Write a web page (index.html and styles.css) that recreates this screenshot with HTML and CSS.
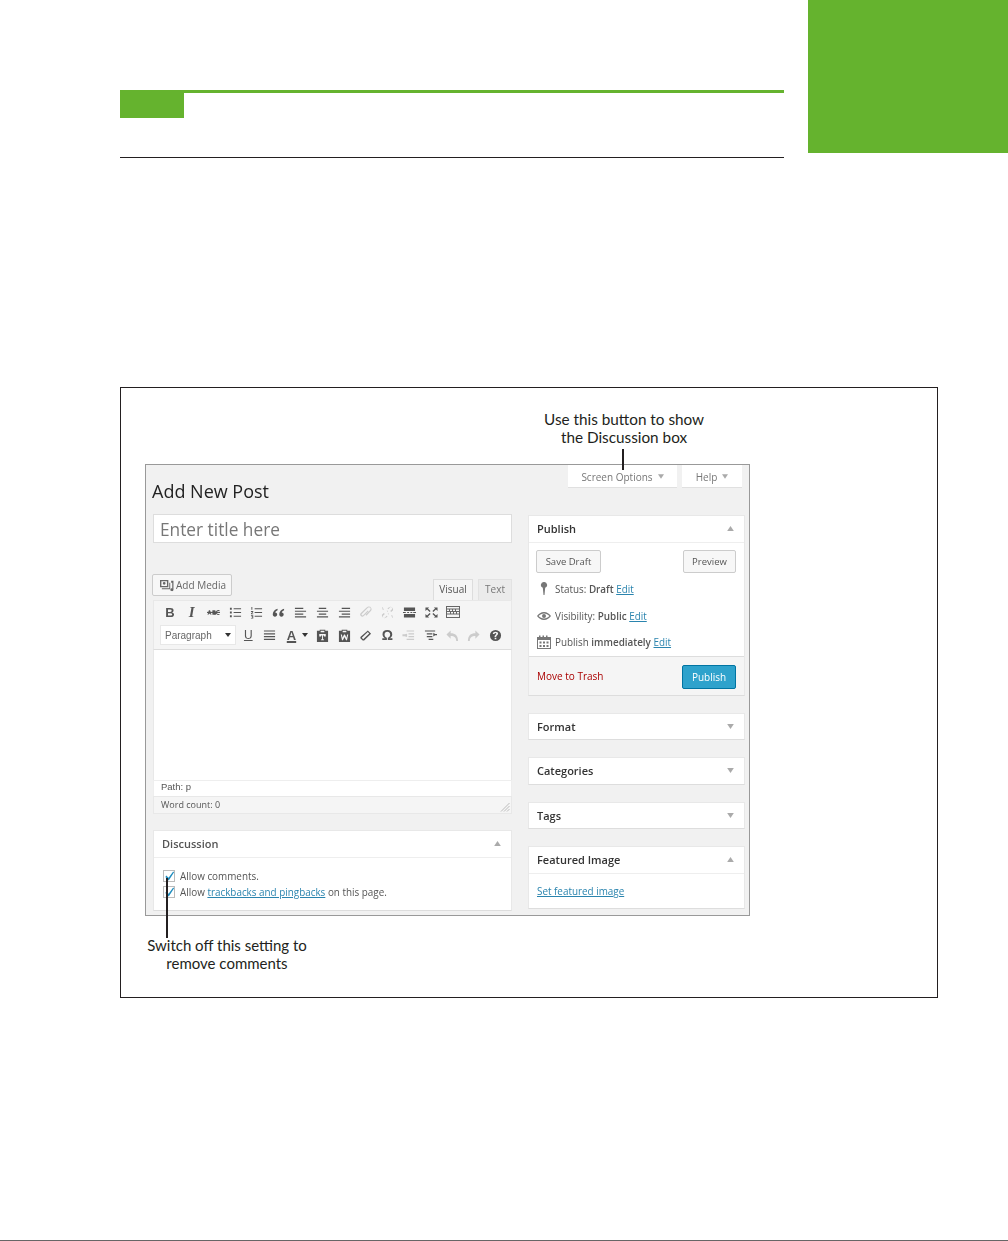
FILE: index.html
```html
<!DOCTYPE html>
<html lang="en">
<head>
<meta charset="utf-8">
<title>Add New Post</title>
<link rel="stylesheet" href="styles.css">
</head>
<body>
<div class="page">
  <header class="head">
    <div class="note">
      <div class="note-bar"><div class="note-tag"></div></div>
    </div>
    <div class="corner"></div>
  </header>

  <figure class="figure">
    <div class="callout callout-top">Use this button to show<br>the Discussion box</div>
    <div class="leader leader-top"></div>
    <div class="callout callout-bottom">Switch off this setting to<br>remove comments</div>
    <div class="leader leader-bottom"></div>

    <div class="screen">
      <div class="topbar">
        <h1 class="title">Add New Post</h1>
        <div class="tabs">
          <div class="tab tab-screen">Screen Options <svg class="tri" viewBox="0 0 8 6"><path d="M0 0h8L4 6z"/></svg></div>
          <div class="tab tab-help">Help <svg class="tri" viewBox="0 0 8 6"><path d="M0 0h8L4 6z"/></svg></div>
        </div>
      </div>

      <div class="columns">
        <div class="col-main">
          <div class="title-input">Enter title here</div>
          <div class="media-row">
            <div class="add-media">
              <svg class="media-ic" viewBox="0 0 16 14"><path fill-rule="evenodd" d="M1 1h9v8H1zM2.500 2.500v5h6v-5zM5.500 3.200a1.500 1.500 0 1 1 0 3 1.500 1.500 0 0 1 0-3z"/><path d="M3 10h8V4h1v7H3z"/><path d="M13 2h2.500v9.500a1.700 1.500 0 1 1-1.300-1.400V4H13z"/></svg>
              Add Media
            </div>
            <div class="modes">
              <div class="mode mode-on">Visual</div>
              <div class="mode">Text</div>
            </div>
          </div>

          <div class="toolbar">
            <div class="tool-row tool-row-1">
              <span class="tb tb-b">B</span>
              <span class="tb tb-i">I</span>
              <span class="tb"><svg class="ic" viewBox="0 0 14 14"><path d="M0 6.300h14v1.200H0z"/><path d="M2 4.500h1.300L4.800 9.500H3.800l-.3-1.100H1.900l-.3 1.100H.6zM5.800 4.500h2.300a1.300 1.300 0 0 1 .7 2.400 1.300 1.300 0 0 1-.7 2.600H5.800zM13.500 5.500c-1.800-.6-2.700.2-2.700 1.500s.9 2.100 2.700 1.500v1c-2.500.6-3.900-.6-3.900-2.500s1.400-3.100 3.900-2.500z"/></svg></span>
              <span class="tb"><svg class="ic" viewBox="0 0 14 14"><path d="M1 2h2v2H1zM1 6h2v2H1zM1 10h2v2H1zM5 2.500h8v1H5zM5 6.500h8v1H5zM5 10.500h8v1H5z"/></svg></span>
              <span class="tb"><svg class="ic" viewBox="0 0 14 14"><path d="M1.500 1h1v3h-1zM1 5.500h2.500v1L2 8h1.500v1H1V8l1.500-1.500H1zM1 10h2.500v3.500H1v-.7h1.500v-.7H1.500v-.7h1v-.7H1zM5 2.500h8v1H5zM5 6.500h8v1H5zM5 10.500h8v1H5z"/></svg></span>
              <span class="tb"><svg class="ic" viewBox="0 0 14 14"><path d="M6 3C3 4 .8 6 .8 9c0 1.500 1 2.500 2.400 2.500S5.600 10.500 5.600 9.200 4.600 7 3.500 7c.3-1.200 1.200-2 2.500-2.500zM13 3c-3 1-5.200 3-5.200 6 0 1.500 1 2.500 2.400 2.500s2.400-1 2.400-2.300S11.600 7 10.500 7c.3-1.200 1.200-2 2.500-2.500z"/></svg></span>
              <span class="tb"><svg class="ic" viewBox="0 0 14 14"><path d="M1 2h9v1.300H1zM1 5h12v1.300H1zM1 8h9v1.300H1zM1 11h12v1.300H1z"/></svg></span>
              <span class="tb"><svg class="ic" viewBox="0 0 14 14"><path d="M3 2h8v1.300H3zM1 5h12v1.300H1zM3 8h8v1.300H3zM1 11h12v1.300H1z"/></svg></span>
              <span class="tb"><svg class="ic" viewBox="0 0 14 14"><path d="M4 2h9v1.300H4zM1 5h12v1.300H1zM4 8h9v1.300H4zM1 11h12v1.300H1z"/></svg></span>
              <span class="tb"><svg class="ic ic-off" viewBox="0 0 14 14"><path d="M10.500.5a3 3 0 0 1 2.500 4.700L8 10.500l-1-1 5-5.300a1.600 1.600 0 0 0-2.400-2.200L3 8.500a1 1 0 0 0 1.400 1.400l5-5 .8.8-5 5.100a2.200 2.200 0 0 1-3.200-3.200L8.500 1.300A3 3 0 0 1 10.500.5z"/></svg></span>
              <span class="tb"><svg class="ic ic-off" viewBox="0 0 14 14"><path d="M9.500 1a3 3 0 0 1 3.500 3.500L11 6.500 9.900 5.400l1.700-1.700a1.400 1.400 0 0 0-2-2L8 3.400 6.900 2.300zM4.500 13A3 3 0 0 1 1 9.500L3 7.500l1.100 1.100-1.700 1.700a1.400 1.400 0 0 0 2 2L6 10.600l1.100 1.100zM1 1l1 .5L3 4l-1 .3zM13 13l-1-.5L11 10l1-.3zM6 5h1.500v1.500zM7 8h1.500v1.500z"/></svg></span>
              <span class="tb"><svg class="ic" viewBox="0 0 14 14"><path d="M1 1.500h12v4H1zM1 8.500h12v4H1zM0 6.500h3v1H0zM4.500 6.500h2v1h-2zM8 6.500h2v1H8zM11 6.500h3v1h-3z"/></svg></span>
              <span class="tb"><svg class="ic" viewBox="0 0 14 14"><path d="M.5 1.500h4L3.200 2.800 6 5.500 5 6.500 2.200 3.800.5 5.500zM13.500 1.500v4l-1.700-1.700L9 6.500 8 5.500l2.800-2.700-1.300-1.300zM.5 12.500v-4l1.700 1.700L5 7.500l1 1-2.800 2.700 1.300 1.300zM13.500 12.500h-4l1.300-1.300L8 8.500l1-1 2.800 2.700 1.700-1.700z"/></svg></span>
              <span class="tb"><svg class="ic ic-kbd" viewBox="0 0 14 14"><path fill-rule="evenodd" d="M0 1h14v12H0zM1 2v1.500h12V2zM1 4.500V6h2V4.500zM4 4.500V6h2V4.500zM7 4.500V6h2V4.500zM10 4.500V6h3V4.500zM1 7V8.500h3V7zM5 7V8.500h2V7zM8 7V8.500h2V7zM11 7V8.500h2V7zM1 9.500V12h12V9.500z"/></svg></span>
            </div>
            <div class="tool-row tool-row-2">
              <div class="format-select">Paragraph <svg class="caret" viewBox="0 0 6 4"><path d="M0 0h6L3 4z"/></svg></div>
              <span class="tb tb-u">U</span>
              <span class="tb"><svg class="ic" viewBox="0 0 14 14"><path d="M1 1.500h12v1.300H1zM1 4.500h12v1.300H1zM1 7.500h12v1.300H1zM1 10.500h12v1.300H1z"/></svg></span>
              <span class="tb tb-color">A</span>
              <span class="tb-caret"><svg class="caret" viewBox="0 0 6 4"><path d="M0 0h6L3 4z"/></svg></span>
              <span class="tb"><svg class="ic" viewBox="0 0 14 14"><path fill-rule="evenodd" d="M1 2h3V.8h6V2h3v12H1zM5 2v1.500h4V2zM3.500 5.500V8h2V7h1v4H5.500v1h3v-1H7.500V7h1v1h2V5.500z"/></svg></span>
              <span class="tb"><svg class="ic" viewBox="0 0 14 14"><path fill-rule="evenodd" d="M1 2h3V.8h6V2h3v12H1zM5 2v1.500h4V2zM3 6l1.300 6h1L7 8.500 8.700 12h1L11 6H9.800l-.7 3.500L7.500 6h-1L4.900 9.500 4.200 6z"/></svg></span>
              <span class="tb"><svg class="ic" viewBox="0 0 14 14"><path fill-rule="evenodd" d="M9.500 1.500 13 5 5.500 12.500H4L1.500 10V8.500zM9.500 3.300 3 9.500 4.500 11 11 4.800z"/></svg></span>
              <span class="tb tb-omega">Ω</span>
              <span class="tb"><svg class="ic ic-off" viewBox="0 0 14 14"><path d="M5 1.500h8v1.300H5zM7 4.500h6v1.300H7zM7 7.500h6v1.300H7zM5 10.500h8v1.300H5zM5.500 5v3.500L2.800 7.800H.5V5.700h2.300z"/></svg></span>
              <span class="tb"><svg class="ic" viewBox="0 0 14 14"><path d="M1 1.500h11v1.300H1zM3 4.500h6v1.300H3zM3 7.500h6v1.300H3zM5 10.500h5v1.300H5zM10 4v4l2-1.300h2V5.300h-2z"/></svg></span>
              <span class="tb"><svg class="ic ic-off" viewBox="0 0 14 14"><path d="M5 1.500v3c5 0 8 2.500 8 8.500h-2c0-3.800-2-5.500-6-5.500v3L.5 6z"/></svg></span>
              <span class="tb"><svg class="ic ic-off" viewBox="0 0 14 14"><path d="M9 1.500v3c-5 0-8 2.500-8 8.500h2c0-3.800 2-5.500 6-5.500v3L13.500 6z"/></svg></span>
              <span class="tb"><svg class="ic" viewBox="0 0 14 14"><path fill-rule="evenodd" d="M7 1a6 6 0 1 1 0 12A6 6 0 0 1 7 1zM7 3c-1.700 0-2.800.9-2.900 2.400h1.800c0-.6.400-1 1-1s1 .3 1 .8c0 1-2 1.300-2 3.300h1.800c0-1.500 2.100-1.600 2.100-3.600C9.800 3.900 8.700 3 7 3zM6.100 9.400v1.700h1.800V9.400z"/></svg></span>
            </div>
          </div>
          <div class="editor"></div>
          <div class="path-row">Path: p</div>
          <div class="word-row">Word count: 0
            <svg class="grip" viewBox="0 0 10 10"><path d="M9.500 1 1 9.500M9.500 4 4 9.500M9.500 7 7 9.500" fill="none" stroke="#bbb" stroke-width="1"/></svg>
          </div>

          <section class="box box-discussion">
            <div class="box-head box-head-rule"><span>Discussion</span><svg class="arrow" viewBox="0 0 8 6"><path d="M0 6h8L4 0z"/></svg></div>
            <div class="discussion-body">
              <div class="check-row">
                <span class="checkbox"><svg viewBox="0 0 12 12"><path d="M2.500 5.500 5 8l5-7 1 1-5.800 8.800L1.500 7z"/></svg></span>
                Allow comments.
              </div>
              <div class="check-row">
                <span class="checkbox"><svg viewBox="0 0 12 12"><path d="M2.500 5.500 5 8l5-7 1 1-5.800 8.800L1.500 7z"/></svg></span>
                <span>Allow <a class="link" href="#">trackbacks and pingbacks</a> on this page.</span>
              </div>
            </div>
          </section>
        </div>

        <aside class="col-side">
          <section class="box box-publish">
            <div class="box-head box-head-rule"><span>Publish</span><svg class="arrow" viewBox="0 0 8 6"><path d="M0 6h8L4 0z"/></svg></div>
            <div class="publish-actions">
              <div class="btn btn-draft">Save Draft</div>
              <div class="btn btn-preview">Preview</div>
            </div>
            <div class="meta">
              <svg class="meta-ic" viewBox="0 0 14 14"><path d="M7 0a3 3 0 0 1 1.200 5.800L7.500 13h-1l-.7-7.200A3 3 0 0 1 7 0z"/></svg>
              <span>Status: <b>Draft</b> <a class="link" href="#">Edit</a></span>
            </div>
            <div class="meta">
              <svg class="meta-ic" viewBox="0 0 14 14"><path fill-rule="evenodd" d="M7 3c3 0 5.500 2 7 4-1.500 2-4 4-7 4S1.500 9 0 7c1.500-2 4-4 7-4zM7 4.500C5 4.500 3 5.500 1.600 7 3 8.500 5 9.500 7 9.500s4-1 5.400-2.500C11 5.500 9 4.500 7 4.500zM7 5a2 2 0 1 1 0 4 2 2 0 0 1 0-4z"/></svg>
              <span>Visibility: <b>Public</b> <a class="link" href="#">Edit</a></span>
            </div>
            <div class="meta">
              <svg class="meta-ic" viewBox="0 0 14 14"><path fill-rule="evenodd" d="M0 2h2V.5h1.500V2h2V.5H7V2h2V.5h1.500V2H14v12H0zM1 5v8h12V5zM2.500 6.500h2v2h-2zM6 6.500h2v2H6zM9.500 6.500h2v2h-2zM2.500 10h2v2h-2zM6 10h2v2H6zM9.500 10h2v2h-2z"/></svg>
              <span>Publish <b>immediately</b> <a class="link" href="#">Edit</a></span>
            </div>
            <div class="publish-foot">
              <a class="trash" href="#">Move to Trash</a>
              <div class="btn-primary">Publish</div>
            </div>
          </section>

          <section class="box box-closed box-format">
            <div class="box-head"><span>Format</span><svg class="arrow" viewBox="0 0 8 6"><path d="M0 0h8L4 6z"/></svg></div>
          </section>
          <section class="box box-closed box-categories">
            <div class="box-head"><span>Categories</span><svg class="arrow" viewBox="0 0 8 6"><path d="M0 0h8L4 6z"/></svg></div>
          </section>
          <section class="box box-closed">
            <div class="box-head"><span>Tags</span><svg class="arrow" viewBox="0 0 8 6"><path d="M0 0h8L4 6z"/></svg></div>
          </section>
          <section class="box box-featured">
            <div class="box-head box-head-rule"><span>Featured Image</span><svg class="arrow" viewBox="0 0 8 6"><path d="M0 6h8L4 0z"/></svg></div>
            <div class="featured-body"><a class="link" href="#">Set featured image</a></div>
          </section>
        </aside>
      </div>
    </div>
  </figure>

  <footer class="foot"></footer>
</div>
</body>
</html>
```
FILE: styles.css
```css
* { box-sizing: border-box; }
html, body { margin: 0; padding: 0; background: #fff; }
body { font-family: "Open Sans", "Liberation Sans", sans-serif; color: #444; }

.page { width: 1008px; height: 1241px; display: flex; flex-direction: column; overflow: hidden; }

.head { display: flex; height: 153px; padding-left: 120px; }
.note { width: 664px; padding-top: 90px; }
.note-bar { height: 68px; border-top: 3px solid #65b32e; border-bottom: 1px solid #231f20; }
.note-tag { width: 64px; height: 25px; background: #65b32e; }
.corner { width: 200px; margin-left: 24px; background: #65b32e; }

.figure { position: relative; width: 818px; height: 611px; margin: 234px 0 0 120px; padding: 76px 0 0 24px; border: 1px solid #231f20; }
.callout { position: absolute; font-family: Lato, "Open Sans", sans-serif; font-size: 15.300px; line-height: 18px; color: #231f20; text-align: center; white-space: nowrap; }
.callout-top { left: 423px; top: 22px; width: 160px; }
.callout-bottom { left: 25px; top: 548px; width: 162px; font-size: 15px; }
.leader { position: absolute; width: 2px; background: #231f20; z-index: 2; }
.leader-top { left: 501px; top: 61px; height: 21px; }
.leader-bottom { left: 45px; top: 490px; height: 60px; }

.screen { width: 605px; height: 452px; background: #f1f1f1; border: 1px solid #999; filter: blur(0.45px); }

.topbar { display: flex; justify-content: space-between; align-items: flex-start; height: 49px; padding: 0 7px 0 6px; }
.title { margin: 14px 0 0; font-size: 18px; font-weight: 400; line-height: 25px; color: #222; }
.tabs { display: flex; gap: 5px; }
.tab { height: 23px; padding-top: 1px; background: #fff; border-bottom: 1px solid #e0e0e0; font-size: 10px; color: #777; display: flex; align-items: center; justify-content: center; gap: 5px; }
.tab-screen { width: 109px; }
.tab-help { width: 60px; }
.tri { width: 6px; height: 5px; fill: #aaa; }

.columns { display: grid; grid-template-columns: 359px 217px; column-gap: 16px; padding-left: 7px; }

.title-input { height: 29px; background: #fff; border: 1px solid #ddd; font-size: 17.300px; line-height: 29px; padding-left: 6px; color: #777; }
.media-row { display: flex; justify-content: space-between; align-items: flex-end; height: 26px; margin: 31px 0 0 -1px; }
.add-media { align-self: flex-start; height: 22px; width: 80px; background: #f7f7f7; border: 1px solid #ccc; border-radius: 2px; font-size: 10px; color: #666; display: flex; align-items: center; gap: 2px; padding-left: 6px; }
.media-ic { width: 15px; height: 13px; fill: #666; }
.modes { display: flex; gap: 5px; }
.mode { height: 21px; width: 34px; background: #ebebeb; border: 1px solid #e2e2e2; border-bottom: 0; font-size: 10px; line-height: 18px; color: #777; text-align: center; }
.mode-on { width: 40px; background: #f5f5f5; color: #555; border-color: #ddd; }

.toolbar { height: 50px; background: #f5f5f5; border: 1px solid #e8e8e8; border-bottom-color: #ddd; padding: 0 0 0 5px; }
.tool-row { display: flex; align-items: center; height: 22px; }
.tool-row-1 .tb { width: 21.770px; }
.tool-row-2 { margin-top: 1px; padding-left: 1px; }
.tb { width: 21.600px; height: 22px; display: flex; align-items: center; justify-content: center; flex: none; font-family: "Liberation Sans", sans-serif; color: #555; font-size: 13px; }
.tb-caret { width: 9.500px; display: flex; align-items: center; flex: none; }
.ic { width: 13px; height: 13px; fill: #555; }
.ic-off { fill: #ccc; }
.ic-kbd { width: 14px; height: 14px; fill: #666; }
.tb-b { font-weight: 700; }
.tb-i { font-family: "Liberation Serif", serif; font-style: italic; font-weight: 700; font-size: 15px; }
.tb-u { text-decoration: underline; font-size: 12px; }
.tb-color { font-weight: 700; font-size: 13px; text-decoration: underline; text-decoration-thickness: 2px; }
.tb-omega { font-weight: 700; font-size: 14px; }
.format-select { width: 76px; height: 20px; flex: none; margin-right: 1.500px; background: #fff; border: 1px solid #e8e8e8; font-family: "Liberation Sans", sans-serif; font-size: 10px; color: #666; display: flex; align-items: center; justify-content: space-between; padding: 0 4px 0 4px; }
.caret { width: 6px; height: 4px; fill: #333; }

.editor { height: 130px; background: #fff; border-left: 1px solid #e8e8e8; border-right: 1px solid #e8e8e8; }
.path-row { height: 16px; background: #fff; border: 1px solid #eee; border-bottom: 0; font-family: "Liberation Sans", sans-serif; font-size: 9.500px; line-height: 12px; padding-left: 7px; color: #555; }
.word-row { position: relative; height: 18px; background: #f5f5f5; border: 1px solid #e8e8e8; font-size: 9px; line-height: 16px; padding-left: 7px; color: #555; }
.grip { position: absolute; right: 1px; bottom: 1px; width: 10px; height: 10px; }

.box { background: #fff; border: 1px solid #e8e8e8; border-bottom-color: #ddd; }
.box-head { display: flex; justify-content: space-between; align-items: center; height: 27px; padding: 0 10px 0 8px; font-size: 11px; font-weight: 600; color: #333; }
.box-head-rule { height: 27px; padding-bottom: 1px; border-bottom: 1px solid #eee; }
.arrow { width: 7px; height: 5px; fill: #aaa; }

.box-discussion { height: 81px; margin-top: 16px; color: #555; }
.box-discussion .box-head { font-weight: 600; color: #555; }
.discussion-body { padding-top: 10px; padding-left: 9px; font-size: 9.900px; }
.check-row { display: flex; align-items: center; gap: 5px; height: 16px; }
.checkbox { width: 12px; height: 12px; flex: none; background: #fff; border: 1px solid #bbb; display: block; position: relative; }
.checkbox svg { position: absolute; left: 0; top: -1px; width: 11px; height: 12px; fill: #1e8cbe; }
.link { color: #2a84ae; text-decoration: underline; }

.box-publish { height: 181px; display: flex; flex-direction: column; margin-top: 1px; }
.publish-actions { display: flex; justify-content: space-between; padding: 7px 8px 0 7px; height: 33px; }
.btn { height: 23px; background: #f7f7f7; border: 1px solid #ccc; border-radius: 2px; font-size: 9.500px; line-height: 21px; text-align: center; color: #555; }
.btn-draft { width: 65px; }
.btn-preview { width: 53px; }
.meta { display: flex; align-items: center; gap: 4px; height: 26.500px; padding-left: 8px; font-size: 9.900px; color: #555; }
.meta b { font-weight: 600; }
.meta-ic { width: 14px; height: 14px; fill: #777; flex: none; }
.publish-foot { margin-top: auto; height: 39px; display: flex; justify-content: space-between; align-items: center; background: #f5f5f5; border-top: 1px solid #ddd; padding: 2px 8px 0 8px; }
.trash { color: #a00; font-size: 10px; text-decoration: none; margin-bottom: 2px; }
.btn-primary { width: 54px; height: 24px; background: #2ea2cc; border: 1px solid #0074a2; border-radius: 2px; color: #fff; font-size: 10px; line-height: 22px; text-align: center; }

.box-closed { height: 27px; }
.box-closed .box-head { height: 25px; }
.box-categories { height: 28px; }
.box-closed, .box-featured { margin-top: 17px; }
.box-featured { height: 63px; }
.featured-body { padding: 10px 0 0 8px; font-size: 9.900px; }

.foot { margin-top: auto; height: 1px; background: #666; }
```
